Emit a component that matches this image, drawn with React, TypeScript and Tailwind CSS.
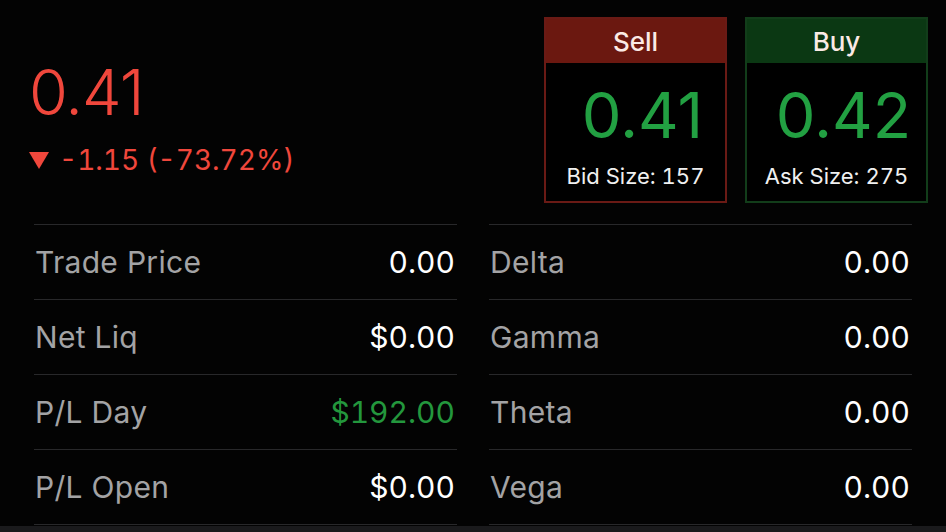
import React from "react";

// --- QUOTE BOX (Sell / Buy) ---
interface QuoteBoxProps {
  title: string;
  price: string;
  sizeLabel: string;
  tone: "sell" | "buy";
}

const QuoteBox = ({ title, price, sizeLabel, tone }: QuoteBoxProps) => {
  const isSell = tone === "sell";
  return (
    <div
      className={`w-[183px] h-[186px] flex flex-col border-2 ${
        isSell ? "border-[#6a1a15]" : "border-[#123d1a]"
      }`}
    >
      <div
        className={`h-[44px] flex items-center justify-center text-[26px] font-medium text-[#fbeae5] ${
          isSell ? "bg-[#6b1810]" : "bg-[#0b3813]"
        }`}
      >
        {title}
      </div>
      <div className="flex-1 flex flex-col items-center bg-black">
        <div className="mt-[21px] text-[63px] leading-none text-[#22a042] pl-[14px]">{price}</div>
        <div className="mt-[18px] text-[22px] leading-none text-[#f0f0f0] tabular-nums">{sizeLabel}</div>
      </div>
    </div>
  );
};

// --- STAT ROW ---
interface StatRowProps {
  label: string;
  value: string;
  positive?: boolean;
}

const StatRow = ({ label, value, positive }: StatRowProps) => (
  <div className="h-[75px] flex items-center justify-between border-b border-[#28282a]">
    <span className="text-[30px] tracking-[0.3px] text-[#a3a3a5] pl-[1px]">{label}</span>
    <span className={`text-[30px] tabular-nums pr-[2px] ${positive ? "text-[#23973d]" : "text-white"}`}>{value}</span>
  </div>
);

export default function App() {
  const left = [
    { label: "Trade Price", value: "0.00" },
    { label: "Net Liq", value: "$0.00" },
    { label: "P/L Day", value: "$192.00", positive: true },
    { label: "P/L Open", value: "$0.00" },
  ];
  const right = [
    { label: "Delta", value: "0.00" },
    { label: "Gamma", value: "0.00" },
    { label: "Theta", value: "0.00" },
    { label: "Vega", value: "0.00" },
  ];

  return (
    <div
      className="w-[946px] h-[532px] bg-[#030303] overflow-hidden flex flex-col"
      style={{ fontFamily: "Inter, 'Noto Sans', sans-serif" }}
    >
      {/* --- HEADER --- */}
      <div className="flex justify-between pl-[29px] pr-[18px] pt-[17px]">
        <div className="pt-[44px] text-[#f0473c]">
          <div className="text-[63px] leading-none font-light tracking-[-1px]">0.41</div>
          <div className="mt-[22px] flex items-center text-[28px] leading-none tabular-nums">
            <svg width="20" height="17" viewBox="0 0 20 17" className="mr-[10px]">
              <path d="M0 0 H20 L10 17 Z" fill="#f0473c" />
            </svg>
            <span>-1.15 (-73.72%)</span>
          </div>
        </div>
        <div className="flex gap-[18px]">
          <QuoteBox title="Sell" price="0.41" sizeLabel="Bid Size: 157" tone="sell" />
          <QuoteBox title="Buy" price="0.42" sizeLabel="Ask Size: 275" tone="buy" />
        </div>
      </div>

      {/* --- STATS TABLE --- */}
      <div className="mt-[21px] px-[34px] grid grid-cols-2 gap-x-[32px]">
        <div className="border-t border-[#28282a]">
          {left.map((r) => (
            <StatRow key={r.label} {...r} />
          ))}
        </div>
        <div className="border-t border-[#28282a]">
          {right.map((r) => (
            <StatRow key={r.label} {...r} />
          ))}
        </div>
      </div>
      <div className="flex-1 bg-[#1a1a1c] mt-[1px]" />
    </div>
  );
}
